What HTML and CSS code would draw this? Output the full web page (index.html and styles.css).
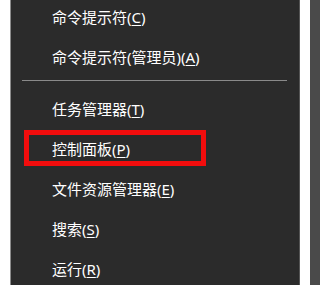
FILE: index.html
```html
<!DOCTYPE html>
<html lang="zh-CN">
<head>
<meta charset="utf-8">
<title>Win+X 菜单</title>
<link rel="stylesheet" href="styles.css">
</head>
<body>
<div class="screen">
  <div class="gap-left"></div>
  <nav class="menu">
    <ul class="list">
      <li class="item">命令提示符(<u>C</u>)</li>
      <li class="item">命令提示符(管理员)(<u>A</u>)</li>
      <li class="sep" role="separator"></li>
      <li class="item">任务管理器(<u>T</u>)</li>
      <li class="item highlighted">控制面板(<u>P</u>)<span class="mark"></span></li>
      <li class="item">文件资源管理器(<u>E</u>)</li>
      <li class="item">搜索(<u>S</u>)</li>
      <li class="item">运行(<u>R</u>)</li>
    </ul>
  </nav>
  <div class="gap-right"></div>
  <div class="edge"></div>
</div>
</body>
</html>
```
FILE: styles.css
```css
html, body {
  margin: 0;
  padding: 0;
  background: #ffffff;
}
body {
  font-family: "Noto Sans", "Noto Sans CJK SC", sans-serif;
}
.screen {
  display: flex;
  height: 285px;
  overflow: hidden;
}
.gap-left {
  width: 10px;
  flex: none;
  background: #ffffff;
}
.menu {
  width: 288px;
  flex: none;
  background: #2b2b2b;
  border-left: 1px solid #8c8c8c;
  border-right: 1px solid #555555;
  box-sizing: border-box;
  width: 290px;
}
.list {
  list-style: none;
  margin: -3px 0 0 0;
  padding: 0;
}
.item {
  position: relative;
  height: 40px;
  line-height: 40px;
  padding-left: 41px;
  color: #ffffff;
  font-size: 15px;
  white-space: nowrap;
}
.item u {
  text-decoration: underline;
  text-decoration-thickness: 1px;
  text-underline-offset: 2px;
}
.sep {
  height: 1px;
  margin: 3px 12px 8px 11px;
  background: #8a8a8a;
}
.mark {
  position: absolute;
  left: 13px;
  top: 1px;
  width: 182px;
  height: 36px;
  box-sizing: border-box;
  border: 5px solid #f20d0d;
}
.gap-right {
  width: 10px;
  flex: none;
  background: #ffffff;
}
.edge {
  flex: 1;
  background: #4a4a4a;
}
```
